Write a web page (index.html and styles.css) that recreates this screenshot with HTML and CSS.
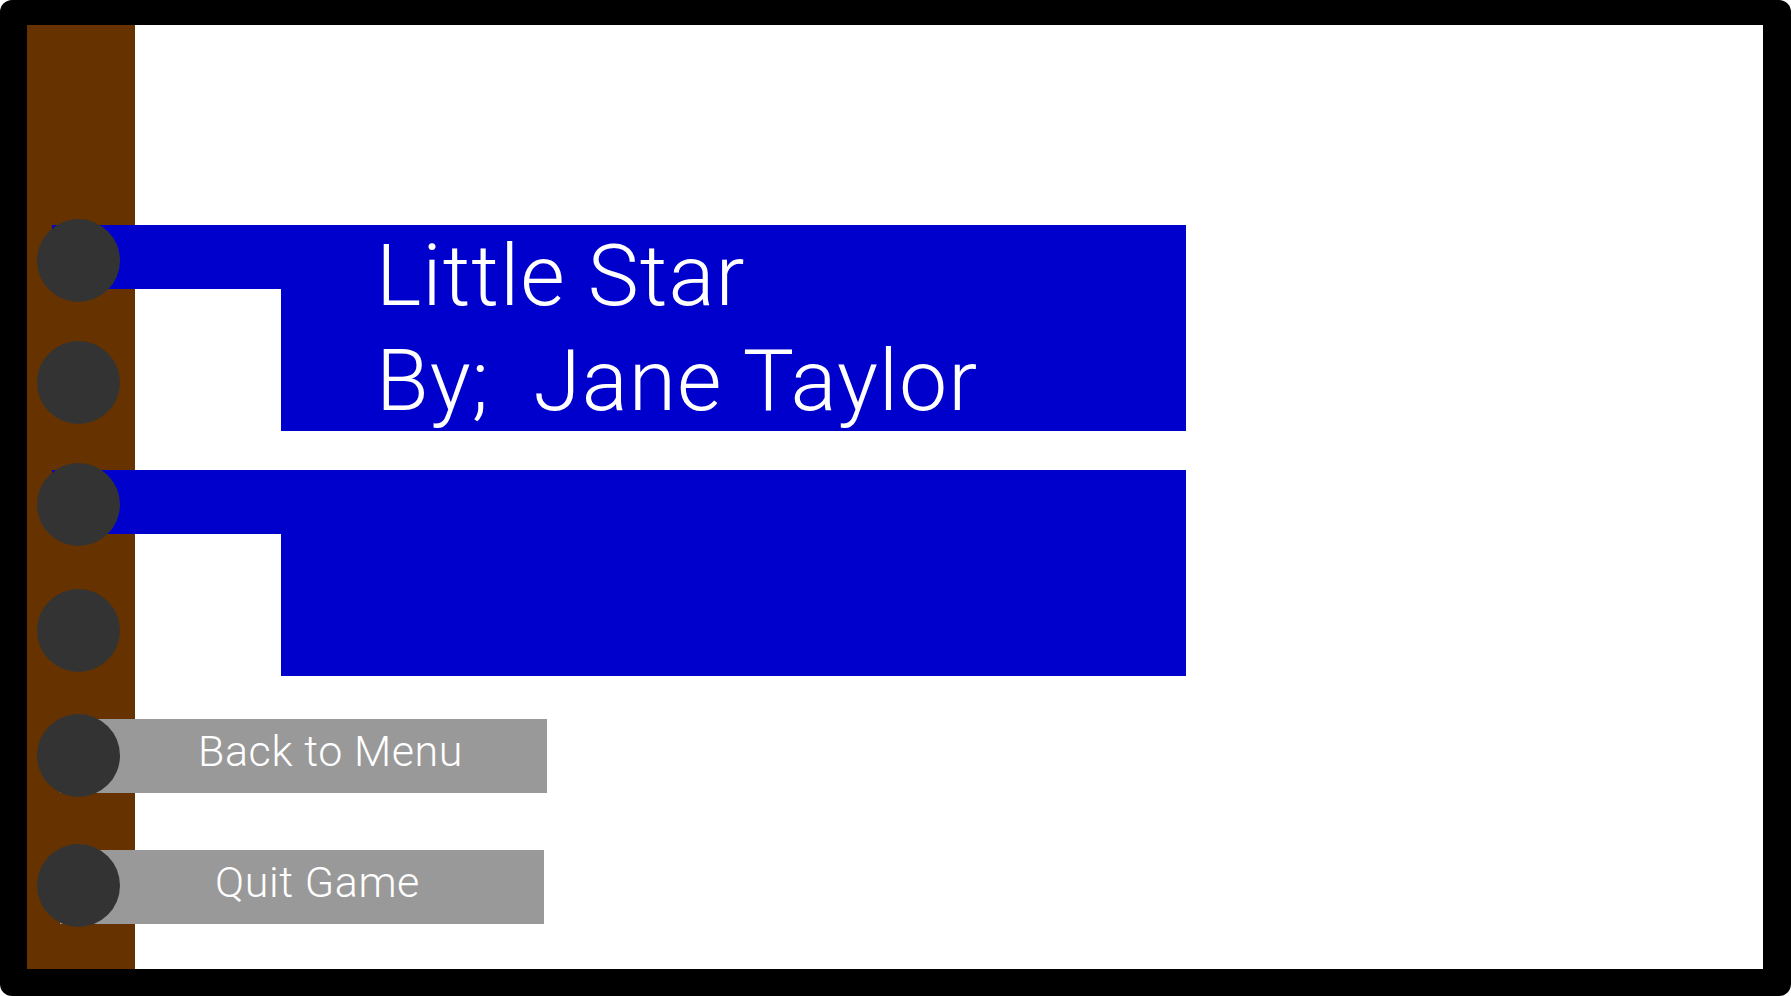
FILE: index.html
```html
<!DOCTYPE html>
<html>
<head>
<meta charset="utf-8">
<link rel="stylesheet" href="styles.css">
</head>
<body>
<div class="frame">
  <div class="page">
    <div class="rings">
      <span class="ring r1"></span>
      <span class="ring r2"></span>
      <span class="ring r3"></span>
      <span class="ring r4"></span>
      <span class="ring r5"></span>
      <span class="ring r6"></span>
    </div>
    <div class="content">
      <div class="card">
        <div class="stub"></div>
        <div class="panel"><div class="title">Little Star
By;  Jane Taylor</div></div>
      </div>
      <div class="card card2">
        <div class="stub"></div>
        <div class="panel"></div>
      </div>
      <div class="btn btn-back">Back to Menu</div>
      <div class="btn btn-quit">Quit Game</div>
    </div>
  </div>
</div>
</body>
</html>
```
FILE: styles.css
```css
html, body {
  margin: 0;
  padding: 0;
  background: #fff;
}
.frame {
  width: 1791px;
  height: 996px;
  box-sizing: border-box;
  background: #000;
  border-radius: 12px;
  padding: 25px 28px 27px 27px;
}
.page {
  position: relative;
  height: 100%;
  background: linear-gradient(to right, #663300 0, #663300 108px, #fff 108px);
  font-family: Roboto, "Liberation Sans", sans-serif;
  font-weight: 300;
  color: #fff;
}
.content {
  display: flex;
  flex-direction: column;
  align-items: flex-start;
  padding-top: 200px;
  padding-left: 25px;
}
.card {
  display: flex;
  align-items: flex-start;
}
.card2 {
  margin-top: 39px;
}
.stub {
  width: 229px;
  height: 64px;
  background: #0000cc;
}
.panel {
  width: 905px;
  height: 206px;
  background: #0000cc;
  box-sizing: border-box;
  padding-left: 95px;
}
.title {
  font-size: 86px;
  line-height: 105px;
  white-space: pre;
  margin-top: -2px;
  letter-spacing: 1px;
}
.btn {
  background: #999999;
  height: 74px;
  box-sizing: border-box;
  font-size: 43px;
  line-height: 64px;
  margin-left: 8px;
  letter-spacing: 0.6px;
}
.btn-back {
  margin-top: 43px;
  width: 487px;
  padding-left: 138px;
}
.btn-quit {
  margin-top: 57px;
  width: 484px;
  padding-left: 155px;
}
.rings {
  position: absolute;
  left: 10px;
  top: 194px;
  display: flex;
  flex-direction: column;
  z-index: 2;
}
.ring {
  display: block;
  width: 83px;
  height: 83px;
  border-radius: 50%;
  background: #333333;
}
.r2, .r3 { margin-top: 39px; }
.r4 { margin-top: 43px; }
.r5 { margin-top: 42px; }
.r6 { margin-top: 47px; }
```
